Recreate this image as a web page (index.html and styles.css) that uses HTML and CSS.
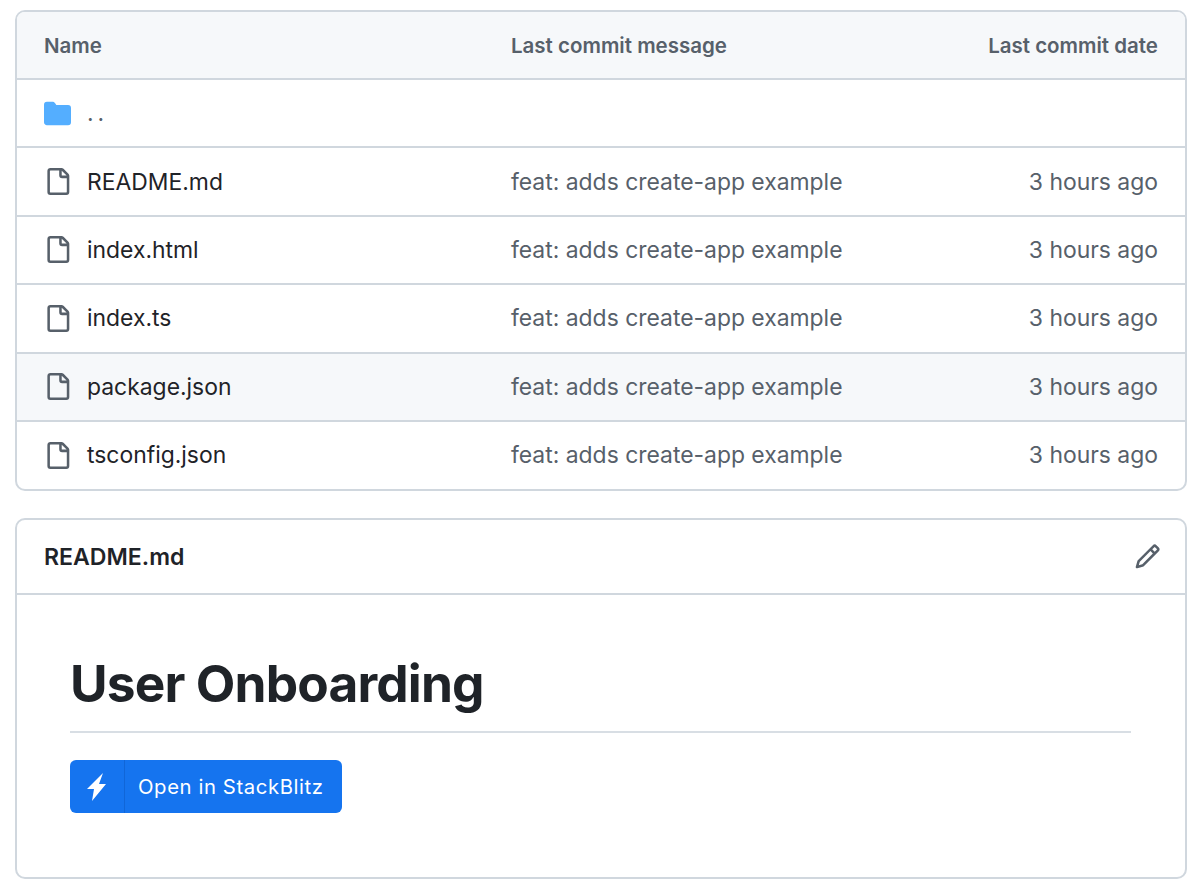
FILE: index.html
```html
<!DOCTYPE html>
<html lang="en">
<head>
<meta charset="utf-8">
<title>User Onboarding</title>
<link rel="stylesheet" href="styles.css">
</head>
<body>
<section class="box files">
  <div class="row head">
    <div class="c-name">Name</div>
    <div class="c-msg">Last commit message</div>
    <div class="c-date">Last commit date</div>
  </div>
  <div class="row">
    <div class="c-name"><svg class="ico folder" viewBox="0 0 16 16"><path d="M1.75 1A1.75 1.75 0 0 0 0 2.75v10.5C0 14.22.78 15 1.75 15h12.5A1.75 1.75 0 0 0 16 13.25v-8.5A1.75 1.75 0 0 0 14.25 3H7.5a.25.25 0 0 1-.2-.1l-.9-1.2C6.07 1.26 5.55 1 5 1H1.75Z"/></svg><span class="dots">..</span></div>
  </div>
  <div class="row">
    <div class="c-name"><svg class="ico file" viewBox="0 0 16 16"><path d="M2 1.75C2 .784 2.784 0 3.75 0h6.586c.464 0 .909.184 1.237.513l2.914 2.914c.329.328.513.773.513 1.237v9.586A1.75 1.75 0 0 1 13.25 16h-9.5A1.75 1.75 0 0 1 2 14.25Zm1.75-.25a.25.25 0 0 0-.25.25v12.5c0 .138.112.25.25.25h9.5a.25.25 0 0 0 .25-.25V6h-2.75A1.75 1.75 0 0 1 9 4.25V1.5Zm6.75.062V4.25c0 .138.112.25.25.25h2.688l-.011-.013-2.914-2.914-.013-.011Z"/></svg><span>README.md</span></div>
    <div class="c-msg">feat: adds create-app example</div>
    <div class="c-date">3 hours ago</div>
  </div>
  <div class="row">
    <div class="c-name"><svg class="ico file" viewBox="0 0 16 16"><path d="M2 1.75C2 .784 2.784 0 3.75 0h6.586c.464 0 .909.184 1.237.513l2.914 2.914c.329.328.513.773.513 1.237v9.586A1.75 1.75 0 0 1 13.25 16h-9.5A1.75 1.75 0 0 1 2 14.25Zm1.75-.25a.25.25 0 0 0-.25.25v12.5c0 .138.112.25.25.25h9.5a.25.25 0 0 0 .25-.25V6h-2.75A1.75 1.75 0 0 1 9 4.25V1.5Zm6.75.062V4.25c0 .138.112.25.25.25h2.688l-.011-.013-2.914-2.914-.013-.011Z"/></svg><span>index.html</span></div>
    <div class="c-msg">feat: adds create-app example</div>
    <div class="c-date">3 hours ago</div>
  </div>
  <div class="row">
    <div class="c-name"><svg class="ico file" viewBox="0 0 16 16"><path d="M2 1.75C2 .784 2.784 0 3.75 0h6.586c.464 0 .909.184 1.237.513l2.914 2.914c.329.328.513.773.513 1.237v9.586A1.75 1.75 0 0 1 13.25 16h-9.5A1.75 1.75 0 0 1 2 14.25Zm1.75-.25a.25.25 0 0 0-.25.25v12.5c0 .138.112.25.25.25h9.5a.25.25 0 0 0 .25-.25V6h-2.75A1.75 1.75 0 0 1 9 4.25V1.5Zm6.75.062V4.25c0 .138.112.25.25.25h2.688l-.011-.013-2.914-2.914-.013-.011Z"/></svg><span>index.ts</span></div>
    <div class="c-msg">feat: adds create-app example</div>
    <div class="c-date">3 hours ago</div>
  </div>
  <div class="row hover">
    <div class="c-name"><svg class="ico file" viewBox="0 0 16 16"><path d="M2 1.75C2 .784 2.784 0 3.75 0h6.586c.464 0 .909.184 1.237.513l2.914 2.914c.329.328.513.773.513 1.237v9.586A1.75 1.75 0 0 1 13.25 16h-9.5A1.75 1.75 0 0 1 2 14.25Zm1.75-.25a.25.25 0 0 0-.25.25v12.5c0 .138.112.25.25.25h9.5a.25.25 0 0 0 .25-.25V6h-2.75A1.75 1.75 0 0 1 9 4.25V1.5Zm6.75.062V4.25c0 .138.112.25.25.25h2.688l-.011-.013-2.914-2.914-.013-.011Z"/></svg><span>package.json</span></div>
    <div class="c-msg">feat: adds create-app example</div>
    <div class="c-date">3 hours ago</div>
  </div>
  <div class="row">
    <div class="c-name"><svg class="ico file" viewBox="0 0 16 16"><path d="M2 1.75C2 .784 2.784 0 3.75 0h6.586c.464 0 .909.184 1.237.513l2.914 2.914c.329.328.513.773.513 1.237v9.586A1.75 1.75 0 0 1 13.25 16h-9.5A1.75 1.75 0 0 1 2 14.25Zm1.75-.25a.25.25 0 0 0-.25.25v12.5c0 .138.112.25.25.25h9.5a.25.25 0 0 0 .25-.25V6h-2.75A1.75 1.75 0 0 1 9 4.25V1.5Zm6.75.062V4.25c0 .138.112.25.25.25h2.688l-.011-.013-2.914-2.914-.013-.011Z"/></svg><span>tsconfig.json</span></div>
    <div class="c-msg">feat: adds create-app example</div>
    <div class="c-date">3 hours ago</div>
  </div>
</section>
<section class="box readme">
  <div class="readme-head">
    <div class="readme-title">README.md</div>
    <svg class="pencil" viewBox="0 0 16 16"><path d="M11.013 1.427a1.75 1.75 0 0 1 2.474 0l1.086 1.086a1.75 1.75 0 0 1 0 2.474l-8.61 8.61c-.21.21-.47.364-.756.445l-3.251.93a.75.75 0 0 1-.927-.928l.929-3.25c.081-.286.235-.547.445-.758l8.61-8.61Zm.176 4.823L9.75 4.81l-6.286 6.287a.253.253 0 0 0-.064.108l-.558 1.953 1.953-.558a.253.253 0 0 0 .108-.064Zm1.238-3.763a.25.25 0 0 0-.354 0L10.811 3.75l1.439 1.44 1.263-1.263a.25.25 0 0 0 0-.354Z"/></svg>
  </div>
  <div class="readme-body">
    <h1>User Onboarding</h1>
    <a class="btn" href="#">
      <span class="btn-ico"><svg viewBox="0 0 28 28"><path d="M20 0 4 16h7L9 28 23 11h-7Z"/></svg></span>
      <span class="btn-text">Open in StackBlitz</span>
    </a>
  </div>
</section>
</body>
</html>
```
FILE: styles.css
```css
* { box-sizing: border-box; }
html, body { background: #fff; }
body {
  margin: 0;
  padding: 10px 13px 0 15px;
  font-family: Inter, "Liberation Sans", sans-serif;
  color: #1f2328;
}
.box {
  border: 2px solid #d0d7de;
  border-radius: 10px;
  overflow: hidden;
  background: #fff;
}
.files { height: 481px; }
.row {
  display: grid;
  grid-template-columns: 467px 1fr auto;
  align-items: center;
  height: 68.4px;
  padding: 0 27px 0 27px;
  border-top: 2px solid #d0d7de;
  font-size: 22.9px;
}
.row.head {
  height: 66px;
  border-top: 0;
  background: #f6f8fa;
  font-size: 20.5px;
  font-weight: 600;
  color: #57606a;
}
.row.hover { background: #f6f8fa; }
.c-name { display: flex; align-items: center; gap: 16px; }
.c-msg, .c-date { color: #57606a; }
.c-date { text-align: right; }
.ico { width: 27px; height: 27px; flex: none; }
.folder { fill: #54aeff; }
.file { fill: #57606a; }
.dots { color: #57606a; letter-spacing: 4px; }
.readme { margin-top: 27px; height: 361px; }
.readme-head {
  display: flex;
  align-items: center;
  justify-content: space-between;
  height: 75px;
  padding: 0 24px 0 27px;
  border-bottom: 2px solid #d0d7de;
}
.readme-title { font-size: 23.1px; font-weight: 600; }
.pencil { width: 27px; height: 27px; fill: #57606a; }
.readme-body { padding: 55px 54px 0 53px; }
h1 {
  margin: 0 0 27px;
  padding-bottom: 15px;
  border-bottom: 2px solid #d8dee4;
  font-size: 51.4px;
  line-height: 66px;
  font-weight: 650;
  letter-spacing: -0.85px;
}
.btn {
  display: inline-flex;
  align-items: stretch;
  height: 53px;
  background: #1574ef;
  border-radius: 6px;
  color: #fff;
  text-decoration: none;
}
.btn-ico {
  display: flex;
  align-items: center;
  justify-content: center;
  width: 55px;
  border-right: 1px solid #1066d8;
}
.btn-ico svg { width: 28px; height: 28px; fill: #fff; }
.btn-text {
  display: flex;
  align-items: center;
  padding: 0 18px 0 13px;
  font-size: 20.3px;
  letter-spacing: 0.6px;
}
```
